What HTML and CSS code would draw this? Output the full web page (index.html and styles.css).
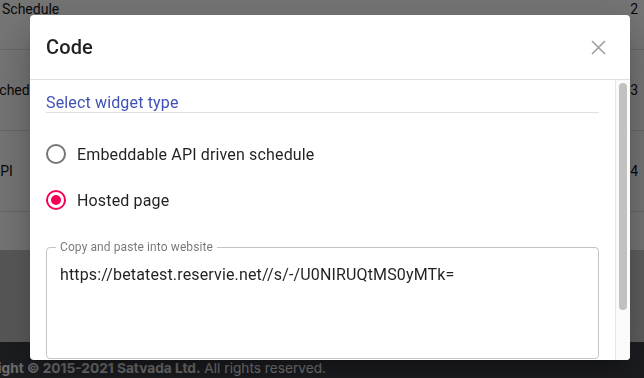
FILE: index.html
```html
<!DOCTYPE html>
<html lang="en">
<head>
<meta charset="UTF-8">
<meta name="viewport" content="width=device-width, initial-scale=1.0">
<title>Code</title>
<link rel="stylesheet" href="styles.css">
</head>
<body>
<div class="page">
  <div class="list">
    <div class="list-row"><span class="row-name">Schedule</span><span class="row-count">2</span></div>
    <div class="list-row"><span class="row-name row-name-cut">Schedule</span><span class="row-count">3</span></div>
    <div class="list-row"><span class="row-name row-name-api">API</span><span class="row-count">4</span></div>
    <div class="list-foot"></div>
  </div>
  <div class="page-fill"></div>
  <footer class="footer">
    <span class="footer-text"><b>Copyright © 2015-2021 Satvada Ltd.</b> All rights reserved.</span>
  </footer>
</div>

<div class="backdrop">
  <div class="dialog">
    <div class="dialog-head">
      <h2 class="dialog-title">Code</h2>
      <button class="close-btn" aria-label="Close">
        <svg width="15" height="15" viewBox="0 0 15 15"><path d="M1 1L14 14M14 1L1 14" stroke="#9e9e9e" stroke-width="1.6" fill="none"/></svg>
      </button>
    </div>
    <div class="dialog-body">
      <div class="dialog-content">
        <div class="section-title">Select widget type</div>
        <div class="options">
          <label class="option">
            <svg class="radio" width="20" height="20" viewBox="0 0 20 20"><circle cx="10" cy="10" r="9" stroke="#757575" stroke-width="2" fill="none"/></svg>
            <span>Embeddable API driven schedule</span>
          </label>
          <label class="option">
            <svg class="radio" width="20" height="20" viewBox="0 0 20 20"><circle cx="10" cy="10" r="9" stroke="#f50057" stroke-width="2" fill="none"/><circle cx="10" cy="10" r="5" fill="#f50057"/></svg>
            <span>Hosted page</span>
          </label>
        </div>
        <fieldset class="code-box">
          <legend>Copy and paste into website</legend>
          <textarea class="code-text" readonly>https://betatest.reservie.net//s/-/U0NIRUQtMS0yMTk=</textarea>
        </fieldset>
      </div>
      <div class="scrollbar"><div class="scroll-thumb"></div></div>
    </div>
  </div>
</div>
</body>
</html>
```

FILE: styles.css
```css
body {
  margin: 0;
  font-family: Roboto, "Liberation Sans", sans-serif;
  background-color: #fff;
  overflow: hidden;
}
.page {
  margin-top: -31px;
}
.list-row {
  height: 80px;
  border-bottom: 1px solid #e0e0e0;
  display: flex;
  align-items: center;
  justify-content: space-between;
  padding: 0 6px 0 2px;
  font-size: 14px;
  color: #111;
}
.row-name-cut {
  margin-left: -11px;
}
.row-name-api {
  margin-left: -11px;
}
.list-foot {
  height: 38px;
  background-color: #fff;
}
.page-fill {
  height: 92px;
  background: linear-gradient(to right, #bdbdbd, #cecece 40px);
}
.footer {
  background-color: #3d3f48;
  height: 60px;
  padding-top: 17px;
  box-sizing: border-box;
  white-space: nowrap;
  font-family: Inter, "Liberation Sans", sans-serif;
  font-size: 13.7px;
  line-height: 18px;
  color: #fff;
}
.footer-text {
  display: inline-block;
  margin-left: -43px;
}
.footer-text b {
  color: #f2f2f2;
}
.backdrop {
  position: fixed;
  inset: 0;
  background-color: rgba(0, 0, 0, 0.54);
  display: flex;
  align-items: flex-start;
  padding: 15px 0 0 30px;
}
.dialog {
  width: 600px;
  height: 345px;
  background-color: #fff;
  border-radius: 4px;
  box-shadow: 0 11px 15px -7px rgba(0, 0, 0, 0.2), 0 24px 38px 3px rgba(0, 0, 0, 0.14), 0 9px 46px 8px rgba(0, 0, 0, 0.12);
  display: flex;
  flex-direction: column;
  overflow: hidden;
}
.dialog-head {
  height: 64px;
  flex-shrink: 0;
  display: flex;
  align-items: center;
  justify-content: space-between;
  padding: 0 24px 0 16px;
  border-bottom: 1px solid #e0e0e0;
}
.dialog-title {
  margin: 0;
  font-size: 20px;
  font-weight: 500;
  letter-spacing: 0.15px;
  color: rgba(0, 0, 0, 0.87);
}
.close-btn {
  border: none;
  background: none;
  padding: 0;
  display: flex;
  cursor: pointer;
}
.dialog-body {
  flex: 1;
  min-height: 0;
  display: flex;
}
.dialog-content {
  flex: 1;
  overflow: hidden;
  padding: 13px 16px 0 16px;
}
.scrollbar {
  width: 8px;
  padding: 3px 3px 0 3px;
  background-color: #fafafa;
  border-left: 1px solid #e8e8e8;
}
.scroll-thumb {
  height: 227px;
  background-color: #c1c1c1;
  border-radius: 4px;
}
.section-title {
  color: #3f51b5;
  font-size: 16px;
  line-height: 19px;
  letter-spacing: 0.15px;
  border-bottom: 1px solid #e0e0e0;
}
.options {
  margin-top: 18px;
}
.option {
  height: 46px;
  display: flex;
  align-items: center;
  gap: 11px;
  font-size: 16px;
  letter-spacing: 0.15px;
  color: rgba(0, 0, 0, 0.87);
  cursor: pointer;
}
.code-box {
  margin: 17px 0 0;
  padding: 0 13px 1px;
  border: 1px solid #c4c4c4;
  border-radius: 4px;
}
.code-box legend {
  font-size: 12px;
  line-height: 14px;
  letter-spacing: 0.1px;
  padding: 0 4px;
  margin-left: -4px;
  color: rgba(0, 0, 0, 0.54);
}
.code-text {
  display: block;
  width: 100%;
  height: 92px;
  margin: 11px 0 0;
  padding: 0;
  border: none;
  outline: none;
  resize: none;
  overflow: hidden;
  font-family: Roboto, "Liberation Sans", sans-serif;
  font-size: 16px;
  line-height: 19px;
  letter-spacing: 0.15px;
  color: rgba(0, 0, 0, 0.87);
}
```
